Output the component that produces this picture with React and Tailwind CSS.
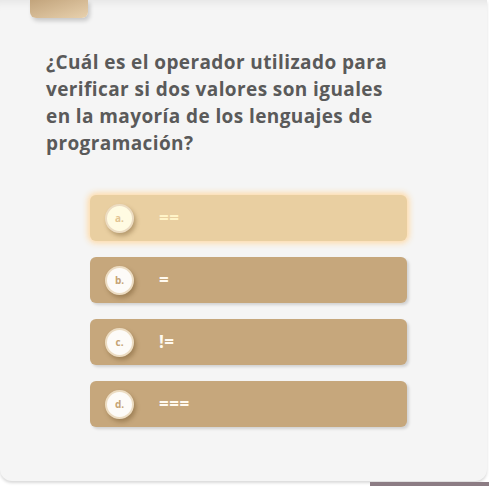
import React from "react";

const options = [
  { key: "a", label: "==", active: true },
  { key: "b", label: "=" },
  { key: "c", label: "!=" },
  { key: "d", label: "===" },
];

const Option = ({ letter, label, active }) => (
  <div
    className={`flex items-center h-[46px] w-[317px] rounded-md pl-[15px] ${
      active
        ? "bg-[#e9cfa1] shadow-[0_0_6px_2px_#ffd9a3]"
        : "bg-[#c6a77c] shadow-[2px_2px_3px_rgba(0,0,0,0.15)]"
    }`}
  >
    <div
      className={`flex items-center justify-center w-[29px] h-[29px] rounded-full border-2 border-[#ecdcc2] shadow-[2px_3px_4px_rgba(90,60,20,0.35)] ${
        active ? "bg-[#fffbe2]" : "bg-[#fdfbf8]"
      }`}
    >
      <span
        className={`text-[10px] font-bold leading-none ${
          active ? "text-[#e2c493]" : "text-[#c5a374]"
        }`}
      >
        {letter}.
      </span>
    </div>
    <span
      className={`ml-[25px] text-[17px] font-bold tracking-[0.5px] ${
        active ? "text-[#fff4c8]" : "text-[#fffaf0]"
      }`}
    >
      {label}
    </span>
  </div>
);

const App = () => {
  return (
    <div
      className="w-[489px] h-[486px] bg-white overflow-hidden relative"
      style={{ fontFamily: "'Open Sans', 'DejaVu Sans', sans-serif" }}
    >
      <div className="w-[487px] h-[481px] bg-[#f5f5f5] rounded-b-xl shadow-[inset_0_10px_10px_-8px_rgba(0,0,0,0.08),0_2px_3px_rgba(0,0,0,0.15)] relative">
        <div className="ml-[30px] w-[58px] h-[18px] rounded-b-md bg-gradient-to-br from-[#c2a47c] to-[#e8d1ae] shadow-[2px_3px_4px_rgba(0,0,0,0.18)]" />
        <h1 className="mt-[31px] ml-[46px] w-[360px] text-[19px] leading-[27px] font-bold text-[#5a5a5a] tracking-[0.4px]">
          ¿Cuál es el operador utilizado para verificar si dos valores son iguales en la mayoría de los lenguajes de programación?
        </h1>
        <div className="mt-[38px] ml-[90px] flex flex-col gap-[16px]">
          {options.map((o) => (
            <Option key={o.key} letter={o.key} label={o.label} active={o.active} />
          ))}
        </div>
      </div>
      <div className="absolute right-0 bottom-0 w-[119px] h-[4px] bg-[#8c7c84]" />
    </div>
  );
};

export default App;
